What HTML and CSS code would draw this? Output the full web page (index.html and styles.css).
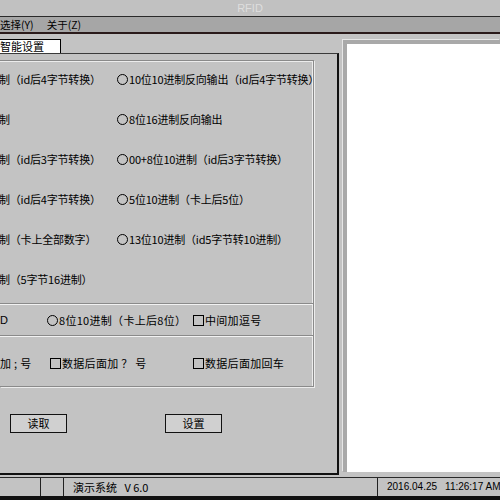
FILE: index.html
```html
<!DOCTYPE html>
<html>
<head>
<meta charset="utf-8">
<link rel="stylesheet" href="styles.css">
</head>
<body>
<div class="window">
  <div class="titlebar"><span class="title">RFID</span></div>
  <div class="menubar">
    <span class="menu-item">选择(Y)</span>
    <span class="menu-item second">关于(Z)</span>
  </div>
  <div class="main">
    <div class="left">
      <div class="tabstrip"><div class="tab">智能设置</div></div>
      <div class="panel">
        <div class="group">
          <div class="grid">
            <div class="cell">制（id后4字节转换）</div>
            <div class="cell"><span class="radio"></span>10位10进制反向输出（id后4字节转换）</div>
            <div class="cell">制</div>
            <div class="cell"><span class="radio"></span>8位16进制反向输出</div>
            <div class="cell">制（id后3字节转换）</div>
            <div class="cell"><span class="radio"></span>00+8位10进制（id后3字节转换）</div>
            <div class="cell">制（id后4字节转换）</div>
            <div class="cell"><span class="radio"></span>5位10进制（卡上后5位）</div>
            <div class="cell">制（卡上全部数字）</div>
            <div class="cell"><span class="radio"></span>13位10进制（id5字节转10进制）</div>
            <div class="cell">制（5字节16进制）</div>
            <div class="cell"></div>
          </div>
          <div class="sep"></div>
          <div class="row row-a">
            <span class="c1">D</span>
            <span class="c2"><span class="radio"></span>8位10进制（卡上后8位）</span>
            <span class="c3"><span class="check"></span>中间加逗号</span>
          </div>
          <div class="sep"></div>
          <div class="row row-b">
            <span class="c1b">加 ; 号</span>
            <span class="c2b"><span class="check"></span>数据后面加 ？ 号</span>
            <span class="c3"><span class="check"></span>数据后面加回车</span>
          </div>
        </div>
        <div class="buttons">
          <div class="btn">读取</div>
          <div class="btn btn2">设置</div>
        </div>
      </div>
    </div>
    <div class="right">
      <div class="textarea"></div>
    </div>
  </div>
  <div class="statusbar">
    <div class="sb sb1"></div>
    <div class="sb sb2"></div>
    <div class="sb sb3">演示系统&nbsp;&nbsp; V 6.0</div>
    <div class="sb sb4"><span class="date">2016.04.25</span><span class="time">11:26:17 AM</span></div>
  </div>
</div>
</body>
</html>
```

FILE: styles.css
```css
html, body {
  margin: 0;
  padding: 0;
  width: 500px;
  height: 500px;
  overflow: hidden;
  background: #c3c3c3;
}
.window {
  width: 500px;
  height: 500px;
  display: flex;
  flex-direction: column;
  font-family: "Noto Sans CJK SC", "Liberation Sans", sans-serif;
  font-size: 11px;
  color: #000;
}
.titlebar {
  height: 16px;
  background: #c1c1c1;
  border-bottom: 1px solid #2a2a2a;
  display: flex;
  justify-content: center;
  align-items: center;
}
.title {
  font-family: "Liberation Sans", sans-serif;
  font-size: 11px;
  color: #dedede;
}
.menubar {
  height: 15px;
  background: #a6a6a6;
  border-bottom: 2px solid #2a1a1a;
  display: flex;
  align-items: center;
  font-size: 10.5px;
}
.menu-item { margin-left: 0; }
.menu-item.second { margin-left: 13px; }
.main {
  flex: 1;
  display: flex;
  min-height: 0;
}
.left {
  width: 339px;
  flex-shrink: 0;
  display: flex;
  flex-direction: column;
}
.tabstrip {
  height: 19px;
  display: flex;
  align-items: flex-end;
}
.tab {
  width: 60px;
  height: 13px;
  background: #fff;
  border: 1px solid #000;
  border-left: none;
  border-bottom: none;
  font-size: 11px;
  line-height: 13px;
}
.panel {
  flex: 1;
  border-top: 1px solid #3a3a3a;
  border-right: 2px solid #111;
  border-bottom: 2px solid #111;
  margin-bottom: 2px;
  padding-top: 6px;
}
.group {
  width: 314px;
  height: 327px;
  border-top: 1px solid #8a8a8a;
  border-right: 1px solid #8a8a8a;
  border-bottom: 1px solid #8a8a8a;
  box-shadow: inset -1px 0 0 #ececec, inset 0 1px 0 #ececec, 1px 1px 0 #ececec;
  padding-top: 10px;
  box-sizing: border-box;
}
.grid {
  display: grid;
  grid-template-columns: 117px 1fr;
  grid-auto-rows: 40px;
  height: 232px;
}
.cell {
  display: flex;
  align-items: flex-start;
  height: 16px;
  line-height: 16px;
  white-space: nowrap;
  letter-spacing: -0.2px;
}
.cell:nth-child(odd) { margin-left: -1px; }
.radio {
  display: inline-block;
  width: 9px;
  height: 9px;
  border: 1.5px solid #000;
  border-radius: 50%;
  margin-right: 1px;
  align-self: center;
  flex-shrink: 0;
}
.check {
  display: inline-block;
  width: 9px;
  height: 9px;
  border: 1.5px solid #000;
  margin-right: 1px;
  flex-shrink: 0;
}
.sep {
  height: 1px;
  background: #8a8a8a;
  border-bottom: 1px solid #f2f2f2;
}
.row {
  height: 30px;
  display: flex;
  align-items: center;
  white-space: nowrap;
  letter-spacing: 0.3px;
}
.row-b { height: 52px; }
.c1 { width: 47px; font-family: "Liberation Sans", sans-serif; }
.c2 { width: 146px; display: flex; align-items: center; }
.c1b { width: 50px; }
.c2b { width: 143px; display: flex; align-items: center; }
.c3 { display: flex; align-items: center; }
.buttons {
  display: flex;
  padding-top: 27px;
  padding-left: 10px;
}
.btn {
  width: 55px;
  height: 17px;
  border: 1.5px solid #111;
  background: #d0d0d0;
  text-align: center;
  line-height: 17px;
  font-size: 11px;
}
.btn2 { margin-left: 98px; }
.right {
  flex: 1;
  padding-top: 6px;
  padding-left: 4px;
  padding-bottom: 5px;
  display: flex;
}
.textarea {
  flex: 1;
  background: #fff;
  border-top: 4px solid #a9a9a9;
  border-left: 4px solid #a9a9a9;
  box-shadow: -1px -1px 0 #e6e6e6;
}
.statusbar {
  height: 18px;
  border-top: 1px solid #2a2a2a;
  border-bottom: 4px solid #111;
  display: flex;
  font-family: "Liberation Sans", "Noto Sans CJK SC", sans-serif;
  font-size: 11px;
  background: #c3c3c3;
}
.sb {
  height: 18px;
  line-height: 18px;
  border-right: 1px solid #222;
  white-space: nowrap;
  flex-shrink: 0;
}
.sb1 { width: 40px; }
.sb2 { width: 22px; }
.sb3 { width: 314px; padding-left: 9px; box-sizing: border-box; font-family: "Noto Sans CJK SC", sans-serif; }
.sb4 {
  flex: 1 1 0;
  min-width: 0;
  border-right: none;
  padding-left: 9px;
  display: flex;
  gap: 8px;
  font-size: 10px;
}
```
